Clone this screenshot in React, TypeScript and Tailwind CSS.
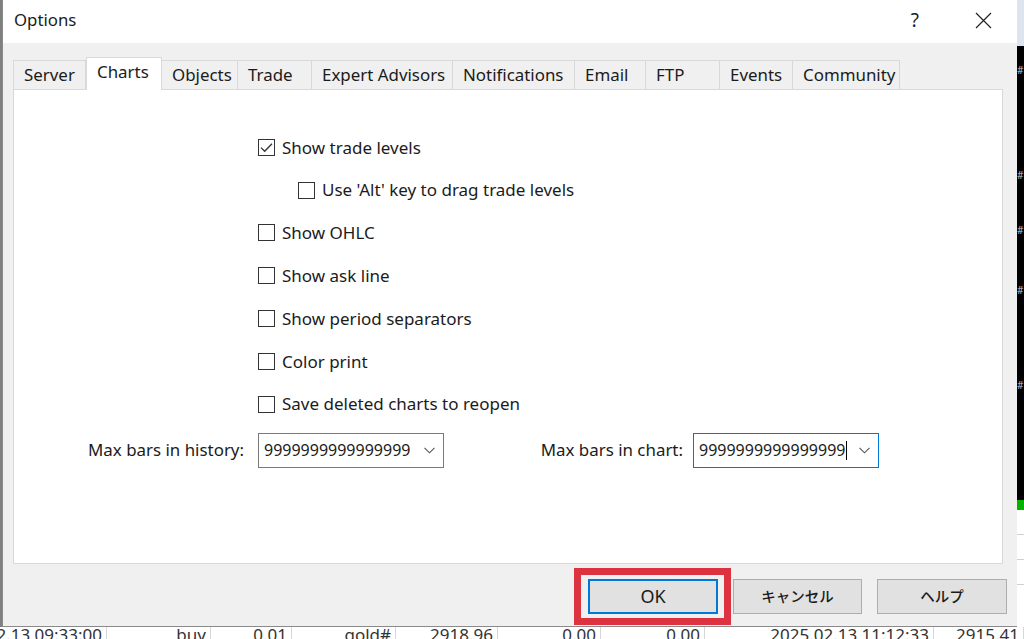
import React from "react";

const tabs = [
  { label: "Server", w: "w-[73px]" },
  { label: "Charts", w: "w-[76px]", active: true },
  { label: "Objects", w: "w-[76px]" },
  { label: "Trade", w: "w-[74px]" },
  { label: "Expert Advisors", w: "w-[141px]" },
  { label: "Notifications", w: "w-[122px]" },
  { label: "Email", w: "w-[71px]" },
  { label: "FTP", w: "w-[74px]" },
  { label: "Events", w: "w-[73px]" },
  { label: "Community", w: "w-[107px]" },
];

const opciones = [
  { label: "Show trade levels", checked: true },
  { label: "Use 'Alt' key to drag trade levels", nested: true },
  { label: "Show OHLC" },
  { label: "Show ask line" },
  { label: "Show period separators" },
  { label: "Color print" },
  { label: "Save deleted charts to reopen" },
];

const fila = [
  { t: "2025.02.13 09:33:00", w: "w-[107px]" },
  { t: "buy", w: "w-[104px]" },
  { t: "0.01", w: "w-[81px]" },
  { t: "gold#", w: "w-[104px]" },
  { t: "2918.96", w: "w-[102px]" },
  { t: "0.00", w: "w-[103px]" },
  { t: "0.00", w: "w-[104px]" },
  { t: "2025.02.13 11:12:33", w: "w-[229px]" },
  { t: "2915.41", w: "w-[90px]" },
];

function Casilla({ checked }: { checked?: boolean }) {
  return (
    <span className="grid h-[17px] w-[17px] shrink-0 place-items-center border border-[#333333] bg-white">
      {checked && (
        <svg width="13" height="11" viewBox="0 0 13 11">
          <path d="M1 5.6 L4.7 9.3 L12 1.8" fill="none" stroke="#333333" strokeWidth="1.3" />
        </svg>
      )}
    </span>
  );
}

function Chevron() {
  return (
    <svg width="11" height="7" viewBox="0 0 11 7" className="shrink-0">
      <path d="M0.5 0.8 L5.5 5.8 L10.5 0.8" fill="none" stroke="#555555" strokeWidth="1.1" />
    </svg>
  );
}

function Combo({ foco }: { foco?: boolean }) {
  return (
    <div
      className={`flex h-[35px] w-[186px] items-center bg-white pl-[5px] pr-[8px] ${
        foco ? "border-[1.5px] border-[#0078d7]" : "border border-[#7a7a7a]"
      }`}
    >
      <span className="text-[16px] leading-none">9999999999999999</span>
      {foco && <span className="ml-px h-[19px] w-px bg-black" />}
      <span className="ml-auto">
        <Chevron />
      </span>
    </div>
  );
}

function Dialogo() {
  return (
    <div className="relative flex w-[1015px] flex-col border-b border-l border-[#8a8a8a] bg-[#f0f0f0]">
      {/* barra de titulo */}
      <div className="flex h-[43px] items-center bg-white pb-[3px] pl-[11px]">
        <span className="text-[16.8px]">Options</span>
        <span className="ml-auto text-[19px]">?</span>
        <svg width="17" height="17" viewBox="0 0 17 17" className="ml-[56px] mr-[25px]">
          <path d="M1 1 L16 16 M16 1 L1 16" stroke="#222222" strokeWidth="1.2" />
        </svg>
      </div>

      {/* pestañas */}
      <div className="flex h-[46px] items-end pl-[10px] pt-[13px]">
        {tabs.map((t) =>
          t.active ? (
            <div
              key={t.label}
              className={`relative z-10 -mb-px flex h-[33px] items-center border border-b-0 border-[#d9d9d9] bg-white pb-[5px] pl-[10px] text-[16.9px] ${t.w}`}
            >
              {t.label}
            </div>
          ) : (
            <div
              key={t.label}
              className={`flex h-[29px] items-center border-r border-t border-[#d9d9d9] pl-[10px] text-[16.9px] first:border-l ${t.w}`}
            >
              {t.label}
            </div>
          )
        )}
      </div>

      {/* panel */}
      <div className="ml-[10px] mr-[14px] flex h-[475px] flex-col border border-[#d9d9d9] bg-white pt-[36px]">
        {opciones.map((o) => (
          <div
            key={o.label}
            className={`flex h-[42.8px] items-center gap-[7px] text-[17px] ${o.nested ? "pl-[284px]" : "pl-[244px]"}`}
          >
            <Casilla checked={o.checked} />
            <span>{o.label}</span>
          </div>
        ))}
        <div className="mt-[7px] flex items-center text-[16.9px]">
          <span className="w-[230px] text-right">Max bars in history:</span>
          <span className="ml-[14px]">
            <Combo />
          </span>
          <span className="w-[239px] text-right">Max bars in chart:</span>
          <span className="ml-[10px]">
            <Combo foco />
          </span>
        </div>
      </div>

      {/* botones */}
      <div className="mt-[15px] flex justify-end gap-[15px] pr-[10px]">
        <button className="grid h-[35px] w-[130px] place-items-center border-2 border-[#0078d7] bg-[#e1e1e1] text-[18px]">
          OK
        </button>
        <button className="grid h-[35px] w-[129px] place-items-center border border-[#adadad] bg-[#e1e1e1] text-[14.5px] font-medium">
          キャンセル
        </button>
        <button className="grid h-[35px] w-[130px] place-items-center border border-[#adadad] bg-[#e1e1e1] text-[14.5px] font-medium">
          ヘルプ
        </button>
      </div>

      {/* marca roja sobre el boton OK */}
      <div className="pointer-events-none absolute left-[571px] top-[568px] h-[57px] w-[157px] border-[7px] border-[#dd3341]" />
    </div>
  );
}

function FranjaGrafico() {
  return (
    <div className="flex w-[7px] flex-col overflow-hidden">
      <div className="h-[46px] bg-[#dde4ee]" />
      <div className="flex flex-1 flex-col bg-black text-[10px] leading-[10px] text-[#c8c8c8]">
        <span className="mt-[19px]">#</span>
        <span className="mt-[95px]">#</span>
        <span className="mt-[45px]">#</span>
        <span className="mt-[50px]">#</span>
        <span className="mt-[85px]">#</span>
      </div>
      <div className="h-[10px] bg-[#00b400]" />
      <div className="flex h-[117px] flex-col bg-white">
        <div className="h-[25px] border-b border-[#d0d0d0]" />
        <div className="h-[25px] border-b border-[#d0d0d0]" />
        <div className="h-[25px] border-b border-[#d0d0d0]" />
      </div>
    </div>
  );
}

export default function App() {
  return (
    <div className="flex h-[639px] w-[1024px] flex-col overflow-hidden bg-white font-['Noto_Sans','Noto_Sans_CJK_JP',sans-serif] text-[#1b1b1b]">
      <div className="flex h-[627px]">
        <div className="w-[2px] bg-[#7f7f7f]" />
        <Dialogo />
        <FranjaGrafico />
      </div>
      <div className="flex h-[12px] overflow-hidden bg-white text-[17px] leading-[16px] text-[#333333]">
        {fila.map((c, i) => (
          <div
            key={i}
            className={`flex shrink-0 justify-end overflow-hidden whitespace-nowrap border-r border-[#d6d6d6] pr-[4px] ${c.w}`}
          >
            {c.t}
          </div>
        ))}
      </div>
    </div>
  );
}
